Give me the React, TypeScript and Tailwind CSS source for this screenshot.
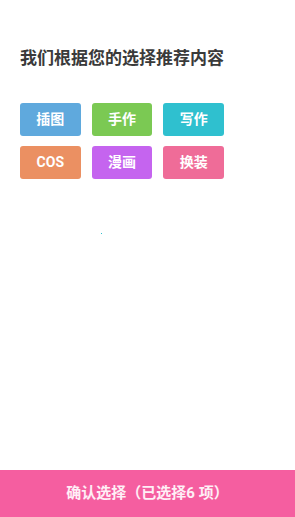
import React from "react";

const tags = [
  { label: "插图", cls: "bg-[#5fa9dd]" },
  { label: "手作", cls: "bg-[#7bc953]" },
  { label: "写作", cls: "bg-[#2fc0cf]" },
  { label: "COS", cls: "bg-[#eb9062]" },
  { label: "漫画", cls: "bg-[#c564ef]" },
  { label: "换装", cls: "bg-[#ef6c98]" },
];

export default function App() {
  return (
    <div
      className="relative flex h-[517px] w-[295px] flex-col bg-white"
      style={{ fontFamily: 'Roboto, "Noto Sans CJK SC", sans-serif' }}
    >
      <div className="flex-1 px-5 pt-[47px]">
        <h1 className="text-[17px] font-bold leading-[22px] text-[#3a3a3a]">
          我们根据您的选择推荐内容
        </h1>
        <div className="mt-[34px] grid w-[204px] grid-cols-3 gap-x-[11px] gap-y-[10px]">
          {tags.map((t) => (
            <div
              key={t.label}
              className={`flex h-[33px] items-center justify-center rounded-[3px] text-[14px] font-bold text-white ${t.cls}`}
            >
              {t.label}
            </div>
          ))}
        </div>
      </div>
      <div className="absolute left-[101px] top-[233px] h-px w-px bg-[#2fc0cf]" />
      <div className="flex h-[47px] items-center justify-center bg-[#f55ea0] text-[15px] font-bold text-white/90">
        确认选择（已选择6 项）
      </div>
    </div>
  );
}
